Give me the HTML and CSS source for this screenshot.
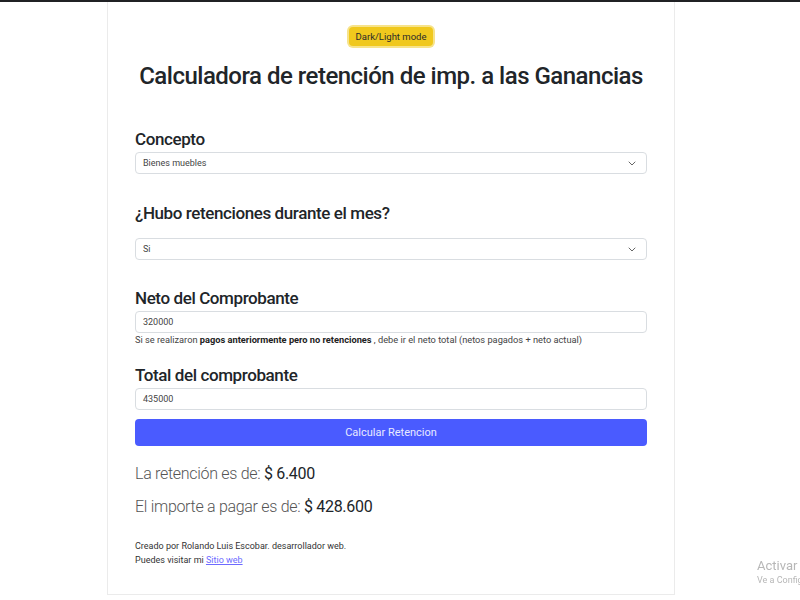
FILE: index.html
```html
<!DOCTYPE html>
<html lang="es">
<head>
<meta charset="utf-8">
<title>Calculadora de retención</title>
<link rel="stylesheet" href="styles.css">
</head>
<body>
<div class="topbar"></div>
<main class="card">
  <div class="toggle-wrap"><button class="toggle" type="button">Dark/Light mode</button></div>
  <h1 class="title">Calculadora de retención de imp. a las Ganancias</h1>
  <form class="form">
    <div class="field field-concepto">
      <label class="label">Concepto</label>
      <div class="select"><span>Bienes muebles</span><svg class="chev" width="8" height="5" viewBox="0 0 16 10"><path d="M2 2l6 6 6-6" fill="none" stroke="#666" stroke-width="2" stroke-linecap="round" stroke-linejoin="round"/></svg></div>
    </div>
    <div class="field field-hubo">
      <label class="label">¿Hubo retenciones durante el mes?</label>
      <div class="select"><span>Si</span><svg class="chev" width="8" height="5" viewBox="0 0 16 10"><path d="M2 2l6 6 6-6" fill="none" stroke="#666" stroke-width="2" stroke-linecap="round" stroke-linejoin="round"/></svg></div>
    </div>
    <div class="field field-neto">
      <label class="label">Neto del Comprobante</label>
      <div class="input">320000</div>
      <p class="help">Si se realizaron <b>pagos anteriormente pero no retenciones</b> , debe ir el neto total (netos pagados + neto actual)</p>
    </div>
    <div class="field field-total">
      <label class="label">Total del comprobante</label>
      <div class="input">435000</div>
    </div>
    <button class="calc" type="button">Calcular Retencion</button>
  </form>
  <p class="result result-first">La retención es de: <span class="value">$ 6.400</span></p>
  <p class="result">El importe a pagar es de: <span class="value">$ 428.600</span></p>
  <footer class="credits">
    <p>Creado por Rolando Luis Escobar. desarrollador web.</p>
    <p>Puedes visitar mi <a href="#">Sitio web</a></p>
  </footer>
</main>
<div class="watermark">
  <div class="wm-title">Activar Windows</div>
  <div class="wm-sub">Ve a Configuración para activar Windows.</div>
</div>
</body>
</html>
```

FILE: styles.css
```css
* { box-sizing: border-box; }
html, body { margin: 0; padding: 0; background: #fff; }
body {
  font-family: Roboto, "Noto Sans", sans-serif;
  color: #212529;
  overflow: hidden;
  height: 600px;
}
.topbar { height: 2px; background: #202124; }
.card {
  width: 568px;
  height: 593px;
  margin-left: 107px;
  border: 1px solid #ebebeb;
  border-top: none;
  padding: 22px 27px 0 27px;
}
.toggle-wrap { display: flex; justify-content: center; }
.toggle {
  height: 19px;
  padding: 0 7px;
  font-family: inherit;
  font-size: 9.5px;
  color: #2b2b2b;
  background: #f0c81d;
  border: none;
  border-radius: 4px;
  box-shadow: 0 0 0 2px #f7e38a;
  margin-top: 3px;
}
.title {
  margin: 14px -20px 0;
  text-align: center;
  font-size: 24px;
  font-weight: 500;
  line-height: 32px;
  letter-spacing: -0.5px;
  white-space: nowrap;
}
.form { margin-top: 36px; }
.label {
  display: block;
  font-size: 17px;
  font-weight: 500;
  line-height: 22px;
  letter-spacing: -0.4px;
}
.select, .input {
  height: 22px;
  border: 1px solid #d9dde1;
  border-radius: 4px;
  font-size: 9px;
  color: #444;
  padding: 0 7px;
  display: flex;
  align-items: center;
  justify-content: space-between;
  margin-top: 2px;
}
.chev { margin-right: 3px; }
.field-hubo { margin-top: 28px; }
.field-hubo .select { margin-top: 14px; }
.field-neto { margin-top: 27px; }
.field-neto .input { margin-top: 2px; }
.help { margin: 1px 0 0; font-size: 9.25px; line-height: 12px; color: #444; }
.help b { color: #222; font-weight: 700; }
.field-total { margin-top: 18px; }
.calc {
  display: block;
  width: 100%;
  height: 27px;
  margin-top: 9px;
  border: none;
  border-radius: 4px;
  background: #4a5bff;
  color: #e8eaff;
  font-family: inherit;
  font-size: 11px;
}
.result {
  margin: 0;
  font-size: 16px;
  font-weight: 300;
  letter-spacing: -0.3px;
  color: #555;
  line-height: 20px;
}
.result-first { margin-top: 18px; }
.result + .result { margin-top: 13px; }
.value { color: #212529; font-weight: 400; }
.credits { margin-top: 22px; font-size: 9px; color: #333; line-height: 14px; }
.credits p { margin: 0; }
.credits a { color: #6d6bff; }
.watermark {
  position: fixed;
  left: 757px;
  top: 558px;
  color: #b7b7b7;
  white-space: nowrap;
}
.wm-title { font-size: 13px; line-height: 16px; }
.wm-sub { font-size: 9px; line-height: 12px; }
```
